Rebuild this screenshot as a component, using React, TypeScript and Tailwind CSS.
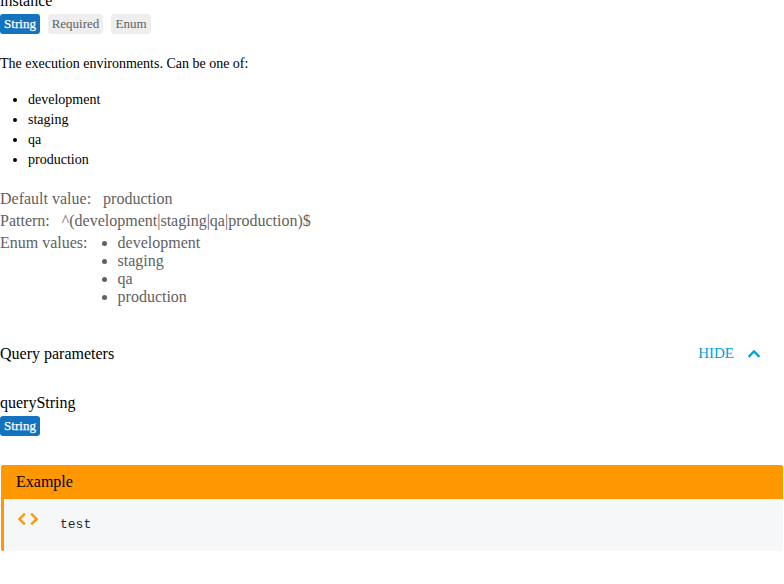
import type { ReactNode } from "react";

const ENVIRONMENTS = ["development", "staging", "qa", "production"];

function TypeBadge({ children }: { children: ReactNode }) {
  return (
    <span className="flex h-5 w-10 items-center justify-center rounded-[3px] bg-[#1473bf] text-[13px] leading-5 text-white [-webkit-text-stroke:0.25px_white]">
      {children}
    </span>
  );
}

function Badge({ width, children }: { width: string; children: ReactNode }) {
  return (
    <span className={`flex h-5 items-center justify-center rounded-[3px] bg-[#eeeeee] text-[13px] leading-5 text-[#616161] ${width}`}>
      {children}
    </span>
  );
}

function Attribute({ label, children }: { label: string; children: ReactNode }) {
  return (
    <div className="mb-1 flex">
      <span className="mr-3">{label}</span>
      {children}
    </div>
  );
}

export default function App() {
  return (
    <main className="h-[584px] w-[784px] overflow-hidden bg-white font-['Liberation_Serif',serif] text-base leading-[18px] text-black">
      <div className="-mt-2 h-[22px]">instance</div>
      <div className="flex gap-2">
        <TypeBadge>String</TypeBadge>
        <Badge width="w-[55px]">Required</Badge>
        <Badge width="w-10">Enum</Badge>
      </div>

      <div className="mt-5 text-sm leading-5">
        <p>The execution environments. Can be one of:</p>
        <ul className="mt-4 list-disc pl-7">
          {ENVIRONMENTS.map((name) => (
            <li key={name}>{name}</li>
          ))}
        </ul>
      </div>

      <div className="mt-5 h-[118px] text-[#616161]">
        <Attribute label="Default value:">production</Attribute>
        <Attribute label="Pattern:">^(development|staging|qa|production)$</Attribute>
        <Attribute label="Enum values:">
          <ul className="list-disc pl-[18px]">
            {ENVIRONMENTS.map((name) => (
              <li key={name}>{name}</li>
            ))}
          </ul>
        </Attribute>
      </div>

      <div className="mt-[26px] flex h-10 items-center justify-between">
        <span>Query parameters</span>
        <button className="mb-0.5 flex items-center pr-[18px] text-[15px] leading-[18px] text-[#00a2df]">
          HIDE
          <svg className="ml-2 size-6" viewBox="0 -1 24 24" fill="currentColor" stroke="currentColor" strokeWidth="0.5">
            <path d="M12 8l-6 6 1.41 1.41L12 10.83l4.59 4.58L18 14z" />
          </svg>
        </button>
      </div>

      <div className="mt-5 h-[22px]">queryString</div>
      <div className="flex">
        <TypeBadge>String</TypeBadge>
      </div>

      <section className="mt-[29px] mr-px ml-px h-[86px] overflow-hidden rounded-[2px] border-l-[3px] border-[#ff9800] bg-[#f5f7f9]">
        <div className="flex h-[34px] items-center bg-[#ff9800] pl-3">Example</div>
        <div className="flex pt-2 pl-3">
          <svg className="size-6 text-[#ff9800]" viewBox="0 0 24 24" fill="currentColor" stroke="currentColor" strokeWidth="0.5">
            <path d="M9.4 16.6L4.8 12l4.6-4.6L8 6l-6 6 6 6 1.4-1.4zm5.2 0l4.6-4.6-4.6-4.6L16 6l6 6-6 6-1.4-1.4z" />
          </svg>
          <code className="mt-[9px] ml-5 font-['Liberation_Mono',monospace] text-[13px] leading-[18px] text-[#24292e]">
            test
          </code>
        </div>
      </section>
    </main>
  );
}
